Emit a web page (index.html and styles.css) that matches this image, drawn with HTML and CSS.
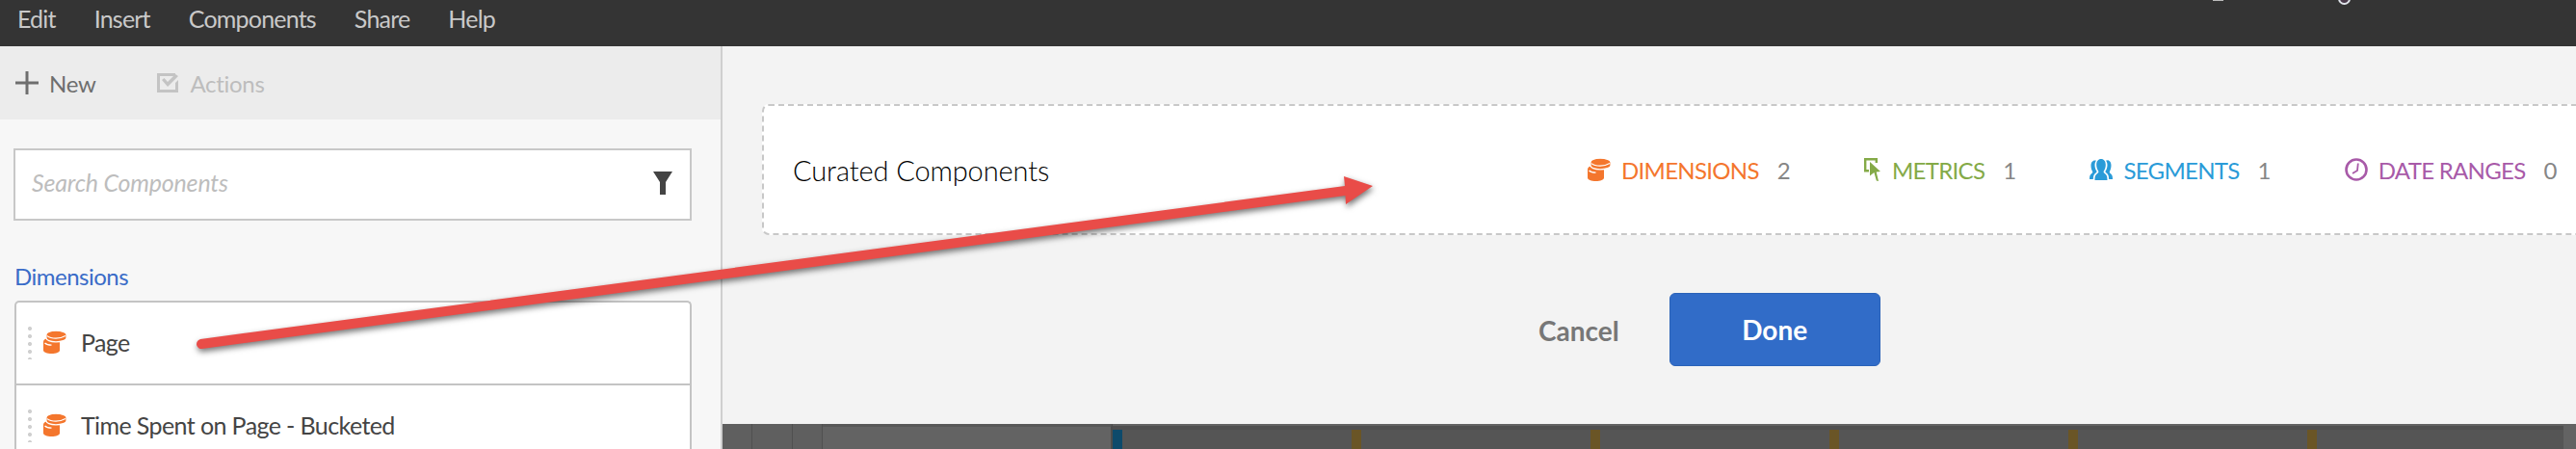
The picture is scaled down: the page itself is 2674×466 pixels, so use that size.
FILE: index.html
```html
<!DOCTYPE html>
<html lang="en">
<head>
  <meta charset="UTF-8">
  <title>Curated Components</title>
  <link rel="stylesheet" href="styles.css">
</head>
<body>
  <svg width="0" height="0" class="defs">
    <symbol id="icon-dim" viewBox="0 0 24 24">
      <path d="M0 11.500c0-2.200 3.800-4 8.500-4s8.500 1.800 8.500 4v9c0 2-3.800 3.500-8.500 3.500S0 22.500 0 20.500z"/>
      <path d="M1.500 13c1.500 1.500 4 2.200 7 2.200" fill="none" stroke="#fff" stroke-width="1.300"/>
      <path d="M3 4.200C3 2 7 .2 13 .2S24 2 24 4.200v3.600c0 2.200-5 4-11 4S3 10 3 7.800z" stroke="#fff" stroke-width="1.200"/>
      <path d="M4 5.600c2 1.700 5 2.600 9 2.600s7-.9 10-2.600" fill="none" stroke="#fff" stroke-width="1.200"/>
    </symbol>
    <symbol id="icon-metric" viewBox="0 0 18 24">
      <path d="M0 0h14v5h-2.400V2.400H2.400v9.600H5v2.400H0z"/>
      <path d="M6 4l11 10-4.300.6 2.300 9.400-2.200-.4-2.400-8.600L6 18.500z"/>
    </symbol>
    <symbol id="icon-seg" viewBox="0 0 24 24">
      <path d="M12 1c3 0 4.800 2.500 4.800 6 0 2.800-1 5-2 6.500-.5 1 0 1.800 1.200 2.800 1.800 1.400 2.500 2.500 2.500 6.700H5.500c0-4.200.7-5.300 2.500-6.700 1.200-1 1.700-1.800 1.200-2.800-1-1.500-2-3.700-2-6.500 0-3.500 1.800-6 4.800-6z"/>
      <path d="M5.500 2.500c.6 0 1 .1 1.500.3C5.800 4.200 5.500 6 5.500 7.500c0 2.500.9 4.700 2 6.200.3.600-.2 1-1 1.700-1.800 1.500-2.500 2.500-2.700 6.600H0c0-3.500.6-4.700 2-5.800 1-.8 1.500-1.500 1.100-2.300C2.300 12.700 1.500 10.500 1.500 8c0-3.200 1.600-5.500 4-5.500z"/>
      <path d="M18.500 2.500c-.6 0-1 .1-1.500.3 1.200 1.400 1.500 3.200 1.500 4.700 0 2.500-.9 4.700-2 6.200-.3.600.2 1 1 1.700 1.800 1.500 2.500 2.500 2.700 6.600H24c0-3.500-.6-4.700-2-5.800-1-.8-1.500-1.500-1.100-2.300.8-1.400 1.600-3.600 1.600-6.100 0-3.200-1.600-5.500-4-5.500z"/>
    </symbol>
    <symbol id="icon-date" viewBox="0 0 24 24">
      <circle cx="12" cy="12" r="10.500" fill="none" stroke="currentColor" stroke-width="2.600"/>
      <path d="M13.800 5.500l-.8 7.500-5 3" fill="none" stroke="currentColor" stroke-width="1.800"/>
    </symbol>
  </svg>

  <header class="menubar">
    <nav class="menu">
      <a>Edit</a>
      <a>Insert</a>
      <a>Components</a>
      <a>Share</a>
      <a>Help</a>
    </nav>
    <div class="user-bits">
      <span class="clip-text"></span>
      <span class="clip-ring"></span>
    </div>
  </header>

  <div class="content">
    <aside class="sidebar">
      <div class="toolbar">
        <a class="tool">
          <svg class="tool-plus" viewBox="0 0 24 24"><path d="M10.500 0h3v10.500H24v3H13.500V24h-3V13.500H0v-3h10.500z"/></svg>
          New
        </a>
        <a class="tool disabled">
          <svg class="tool-check" viewBox="0 0 23 20">
            <path d="M0 0h19v3H3v14h16v-7l3-3v13H0z"/>
            <path d="M5 7l2.500-2 3.500 4 8-8 3 2L11 14z"/>
          </svg>
          Actions
        </a>
      </div>

      <div class="panel-body">
        <div class="search">
          <span class="search-text">Search Components</span>
          <svg class="filter" viewBox="0 0 20 24"><path d="M0 0h20l-7 11v13H7V11z"/></svg>
        </div>

        <h2 class="list-title">Dimensions</h2>
        <ul class="list">
          <li class="list-item">
            <span class="grip"></span>
            <svg class="item-icon"><use href="#icon-dim"/></svg>
            Page
          </li>
          <li class="list-item">
            <span class="grip"></span>
            <svg class="item-icon"><use href="#icon-dim"/></svg>
            Time Spent on Page - Bucketed
          </li>
        </ul>
      </div>
    </aside>

    <main class="main">
      <div class="main-top">
        <section class="curated">
          <h1 class="curated-title">Curated Components</h1>
          <div class="stats">
            <div class="stat dim">
              <svg class="stat-icon"><use href="#icon-dim"/></svg>
              <span class="stat-label">DIMENSIONS</span>
              <span class="stat-count">2</span>
            </div>
            <div class="stat metric">
              <svg class="stat-icon icon-narrow"><use href="#icon-metric"/></svg>
              <span class="stat-label">METRICS</span>
              <span class="stat-count">1</span>
            </div>
            <div class="stat seg">
              <svg class="stat-icon"><use href="#icon-seg"/></svg>
              <span class="stat-label">SEGMENTS</span>
              <span class="stat-count">1</span>
            </div>
            <div class="stat date">
              <svg class="stat-icon"><use href="#icon-date"/></svg>
              <span class="stat-label">DATE RANGES</span>
              <span class="stat-count">0</span>
            </div>
          </div>
        </section>

        <div class="actions">
          <a class="cancel">Cancel</a>
          <button class="done">Done</button>
        </div>
      </div>

      <div class="timeline">
        <div class="tl-head"><i></i><i></i><i></i></div>
        <div class="tl-first"></div>
        <div class="tl-rest">
          <b class="tick tick-blue"></b><b class="tick"></b><b class="tick"></b><b class="tick"></b><b class="tick"></b><b class="tick"></b>
        </div>
        <div class="tl-end"></div>
      </div>
    </main>
  </div>

  <!-- annotation drawn over the screenshot -->
  <svg class="arrow" width="2674" height="466" viewBox="0 0 2674 466">
    <path d="M208 352L1396 193 1395 183 1425 193 1397 212 1396.500 203 209.500 362C207 362.500 204 360 204 357 204 354.500 206 352.500 208 352z"/>
  </svg>
</body>
</html>
```

FILE: styles.css
```css
* {
  box-sizing: border-box;
}
html, body {
  height: 466px;
  overflow: hidden;
}
body {
  margin: 0;
  font-family: "Lato", sans-serif;
  background-color: #f3f3f3;
  position: relative;
}
.defs {
  position: absolute;
}
a {
  display: inline-block;
}

.menubar {
  height: 48px;
  background-color: #343434;
  display: flex;
  justify-content: space-between;
  overflow: hidden;
}
.menu {
  display: flex;
  gap: 40px;
  padding-left: 18px;
  height: 38px;
  align-items: center;
  font-size: 25px;
  letter-spacing: -0.8px;
  color: #c9c9c9;
}
.user-bits {
  display: flex;
  align-items: flex-start;
  gap: 119px;
  padding-right: 234px;
}
.clip-text {
  width: 11px;
  height: 1px;
  background-color: #bbb;
}
.clip-ring {
  width: 13px;
  height: 13px;
  margin-top: -8px;
  border: 2px solid #dfe4ea;
  border-radius: 50%;
  background-color: #4a3a4a;
}

.content {
  display: flex;
  height: 418px;
}

.sidebar {
  width: 750px;
  flex: none;
  background-color: #f7f7f7;
  border-right: 2px solid #cfcfcf;
}
.toolbar {
  height: 76px;
  background-color: #ececec;
  display: flex;
  align-items: center;
  gap: 64px;
  padding-left: 16px;
  font-size: 24px;
  letter-spacing: -0.3px;
  color: #6e6e6e;
}
.tool {
  display: flex;
  align-items: center;
}
.tool-plus {
  width: 24px;
  height: 24px;
  margin-right: 11px;
  fill: #6e6e6e;
}
.tool-check {
  width: 23px;
  height: 20px;
  margin-right: 11px;
  fill: #c4c4c4;
}
.disabled {
  color: #bdbdbd;
}

.panel-body {
  padding: 30px 30px 0 14px;
}
.search {
  height: 75px;
  background-color: #fff;
  border: 2px solid #c8c8c8;
  display: flex;
  align-items: center;
  justify-content: space-between;
  padding: 0 18px 0 17px;
}
.search-text {
  font-style: italic;
  font-size: 25px;
  letter-spacing: -0.2px;
  color: #bdbdbd;
  margin-bottom: 6px;
}
.filter {
  width: 20px;
  height: 24px;
  fill: #444;
  margin-bottom: 4px;
}
.list-title {
  margin: 44px 0 11px 1px;
  font-size: 24px;
  font-weight: 400;
  line-height: 28px;
  letter-spacing: -0.5px;
  color: #3a6cc8;
}
.list {
  list-style: none;
  margin: 0;
  padding: 0;
  background-color: #fff;
  border: 2px solid #c4c4c4;
  border-bottom: none;
  border-radius: 5px 5px 0 0;
  margin-left: 1px;
}
.list-item {
  height: 86px;
  display: flex;
  align-items: center;
  font-size: 25px;
  letter-spacing: -0.6px;
  color: #444;
  border-bottom: 2px solid #c4c4c4;
  padding: 0 0 2px 12px;
}
.grip {
  width: 4px;
  height: 36px;
  margin-right: 12px;
  background-image: radial-gradient(circle, #d0d0d0 2px, transparent 2.2px);
  background-size: 4px 8px;
}
.item-icon {
  width: 24px;
  height: 24px;
  margin-right: 15px;
  fill: #f4762d;
}

.main {
  flex: 1;
  min-width: 0;
  display: flex;
  flex-direction: column;
}
.main-top {
  height: 392px;
  padding: 60px 0 0 41px;
}
.curated {
  width: 2000px;
  height: 136px;
  background-color: #fff;
  border: 2px dashed #c8c8c8;
  border-radius: 7px;
  display: flex;
  align-items: center;
  padding-left: 30px;
}
.curated-title {
  margin: 0;
  width: 825px;
  flex: none;
  font-size: 29px;
  font-weight: 300;
  letter-spacing: -0.1px;
  color: #000;
}
.stats {
  display: flex;
  gap: 77px;
}
.stat {
  display: flex;
  align-items: center;
  font-size: 24px;
  letter-spacing: -0.7px;
}
.stat-icon {
  width: 24px;
  height: 24px;
  margin-right: 11px;
  fill: currentColor;
}
.icon-narrow {
  width: 18px;
}
.stat-count {
  margin-left: 19px;
  color: #868686;
}
.dim { color: #f4762d; }
.metric { color: #84aa47; }
.seg { color: #2a9bd8; }
.date { color: #a85aa8; }

.actions {
  display: flex;
  align-items: center;
  margin: 60px 0 0 806px;
}
.cancel {
  font-size: 28px;
  font-weight: 700;
  color: #777;
  margin-right: 52px;
  margin-top: 2px;
}
.done {
  width: 219px;
  height: 76px;
  background-color: #316cc8;
  border: 1px solid #2a62b8;
  border-radius: 6px;
  color: #fff;
  font-family: inherit;
  font-size: 28px;
  font-weight: 700;
}

.timeline {
  height: 26px;
  display: flex;
  background-color: #555;
}
.tl-head {
  display: flex;
  flex: none;
}
.tl-head i {
  display: block;
  background-color: #5f5f5f;
  border-right: 1px solid #505050;
  width: 31px;
}
.tl-head i:nth-child(2) {
  width: 42px;
}
.tl-first {
  width: 301px;
  flex: none;
  background-color: #636363;
  border-top: 3px solid #585858;
  border-right: 2px solid #4c4c4c;
}
.tl-rest {
  flex: 1;
  display: flex;
  gap: 238px;
  padding-top: 4px;
  border-top: 2px solid #626262;
  background-image: linear-gradient(#4f4f4f 4px, #555 4px);
}
.tl-end {
  width: 13px;
  flex: none;
  background-color: #636363;
}
.tick {
  display: block;
  width: 10px;
  background-color: #6a5526;
}
.tick-blue {
  background-color: #0d4a6b;
}

.arrow {
  position: absolute;
  top: 0;
  left: 0;
  pointer-events: none;
  fill: #e94c48;
  filter: drop-shadow(1px 3px 3px rgba(0, 0, 0, 0.55));
}
```
